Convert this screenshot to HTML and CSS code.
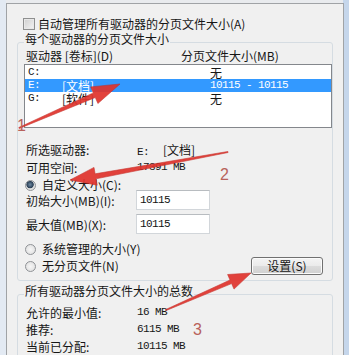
FILE: index.html
```html
<!DOCTYPE html>
<html lang="zh-CN">
<head>
<meta charset="utf-8">
<title>虚拟内存</title>
<link rel="stylesheet" href="styles.css">
</head>
<body>
<div class="window">
  <div class="dialog">
    <div class="check-row"><span class="checkbox"></span><span>自动管理所有驱动器的分页文件大小(A)</span></div>

    <fieldset class="group group-drives">
      <legend>每个驱动器的分页文件大小</legend>
      <div class="list-head"><span>驱动器 [卷标](D)</span><span>分页文件大小(MB)</span></div>
      <div class="listbox">
        <div class="list-row"><span class="mono">C:</span><span></span><span>无</span></div>
        <div class="list-row selected"><span class="mono">E:</span><span>[文档]</span><span class="mono">10115 - 10115</span></div>
        <div class="list-row"><span class="mono">G:</span><span>[软件]</span><span>无</span></div>
      </div>

      <div class="info">
        <span>所选驱动器:</span><span><span class="mono">E:</span><span class="vol">[文档]</span></span>
        <span>可用空间:</span><span class="mono">17391 MB</span>
      </div>

      <div class="radio-row first"><span class="radio checked"></span><span>自定义大小(C):</span></div>
      <div class="field-row"><span>初始大小(MB)(I):</span><span class="input mono">10115</span></div>
      <div class="field-row second"><span>最大值(MB)(X):</span><span class="input mono">10115</span></div>
      <div class="radio-row system"><span class="radio"></span><span>系统管理的大小(Y)</span></div>
      <div class="radio-row last">
        <span class="radio-label"><span class="radio"></span><span>无分页文件(N)</span></span>
        <span class="button">设置(S)</span>
      </div>
    </fieldset>

    <fieldset class="group group-total">
      <legend>所有驱动器分页文件大小的总数</legend>
      <div class="totals">
        <span>允许的最小值:</span><span class="mono">16 MB</span>
        <span>推荐:</span><span class="mono">6115 MB</span>
        <span>当前已分配:</span><span class="mono">10115 MB</span>
      </div>
    </fieldset>
  </div>

  <svg class="annotations" width="349" height="355" viewBox="0 0 349 355">
    <polygon class="arrow" points="18.8,127.5 93.3,92.9 90.7,86.9 120,84 97.9,103.5 95.3,97.5 19.2,128.5"/>
    <polygon class="arrow" points="227.9,151.5 95.1,173.8 94.0,167.4 70,180 97.2,185.2 96.1,178.8 228.1,152.5"/>
    <polygon class="arrow" points="165.8,309.5 230.0,280.0 227.6,274.5 251,273 234.0,289.1 231.6,283.6 166.2,310.5"/>
    <text class="num" x="17" y="131">1</text>
    <text class="num" x="220" y="180">2</text>
    <text class="num" x="193" y="335">3</text>
  </svg>
</div>
</body>
</html>
```

FILE: styles.css
```css
* { box-sizing: border-box; }

html, body {
  margin: 0;
  padding: 0;
}

body {
  width: 349px;
  height: 355px;
  overflow: hidden;
  font-family: "Noto Sans CJK SC", "Noto Sans", sans-serif;
  font-size: 12px;
  color: #161616;
}

.window {
  position: relative;
  width: 349px;
  height: 355px;
  padding: 3px 5px 0 6px;
  background: linear-gradient(90deg, #e3eaf3 0, #e3eaf3 6px, #e9ebee 6px, #e9ebee 343px, #c5d6eb 343px);
}

.dialog {
  height: 100%;
  border: 1px solid #a0a3a6;
  border-bottom: 0;
  background: #f0f0f0;
  padding: 12px 10px 0 10px;
}

.mono {
  font-family: "Liberation Mono", "DejaVu Sans Mono", monospace;
  font-size: 11px;
  letter-spacing: -0.6px;
}

/* checkbox row */
.check-row {
  display: flex;
  align-items: center;
  gap: 3px;
  height: 16px;
  line-height: 16px;
  padding-left: 6px;
  white-space: nowrap;
}

.checkbox {
  width: 12px;
  height: 12px;
  border: 1px solid #8e8f8f;
  background: linear-gradient(135deg, #cfcfcf, #f4f4f4);
  box-shadow: inset 0 0 0 1px #e8e8e8;
}

/* group boxes */
.group {
  margin: 1px 0 0 0;
  min-width: 0;
  border: 1px solid #d5dce2;
  border-radius: 3px;
  padding: 0 0 5px 6px;
}

.group legend {
  padding: 0 1px 6px 1px;
  line-height: 12px;
  white-space: nowrap;
}

.list-head {
  display: grid;
  grid-template-columns: 155px 1fr;
  height: 12px;
  line-height: 12px;
  margin-top: -1px;
  padding-left: 2px;
  white-space: nowrap;
}

.listbox {
  margin-top: 2px;
  height: 64px;
  border: 1px solid #84878c;
  background: #ffffff;
  padding-top: 1px;
}

.list-row {
  display: grid;
  grid-template-columns: 34px 148px 1fr;
  height: 13px;
  line-height: 13px;
  padding-left: 3px;
  white-space: nowrap;
}

.list-row.selected {
  background: #3399ff;
  color: #ffffff;
}

/* selected drive info */
.info {
  display: grid;
  grid-template-columns: 111px 1fr;
  line-height: 15px;
  margin-top: 14px;
  padding-left: 2px;
  white-space: nowrap;
}

.info .vol {
  margin-left: 14px;
}

/* radios */
.radio-row {
  display: flex;
  align-items: center;
  gap: 6px;
  height: 12px;
  line-height: 12px;
  padding-left: 1px;
  white-space: nowrap;
}

.radio-row.first { margin-top: 4px; }
.radio-row.system { margin-top: 9px; }

.radio-row.last {
  margin-top: 2px;
  height: 18px;
  justify-content: space-between;
  padding-right: 9px;
}

.radio-label {
  display: flex;
  align-items: center;
  gap: 6px;
}

.radio {
  width: 11px;
  height: 11px;
  border-radius: 50%;
  border: 1px solid #8f9296;
  background: radial-gradient(circle at 50% 50%, #f6f6f6 0, #dcdcdc 100%);
}

.radio.checked {
  background: radial-gradient(circle at 45% 40%, #6f8aa3 0, #2a3f55 45%, #dcdcdc 55%, #eeeeee 100%);
}

/* size inputs */
.field-row {
  display: grid;
  grid-template-columns: 110px 74px;
  align-items: center;
  height: 20px;
  margin-top: -1px;
  padding-left: 2px;
  white-space: nowrap;
}

.field-row.second { margin-top: 4px; }

.input {
  height: 20px;
  line-height: 18px;
  border: 1px solid #d2d6da;
  border-top-color: #b8bcc0;
  background: #ffffff;
  padding-left: 3px;
  color: #111;
}

.button {
  width: 72px;
  height: 18px;
  line-height: 16px;
  text-align: center;
  border: 1px solid #707070;
  border-radius: 3px;
  background: linear-gradient(#f4f4f4 0%, #ebebeb 48%, #dcdcdc 52%, #d0d0d0 100%);
  box-shadow: inset 0 0 0 1px #fbfbfb;
}

/* totals */
.group-total {
  margin-top: 4px;
  height: 80px;
}

.totals {
  display: grid;
  grid-template-columns: 111px 1fr;
  line-height: 17px;
  margin-top: 1px;
  padding-left: 2px;
  white-space: nowrap;
}

/* annotations */
.annotations {
  position: absolute;
  left: 0;
  top: 0;
  pointer-events: none;
}

.arrow {
  fill: #e0332c;
  stroke: #c42a24;
  stroke-width: 0.6;
  opacity: 0.92;
}

.num {
  font-family: "Liberation Sans", sans-serif;
  font-size: 16px;
  fill: #b8625b;
}
```
